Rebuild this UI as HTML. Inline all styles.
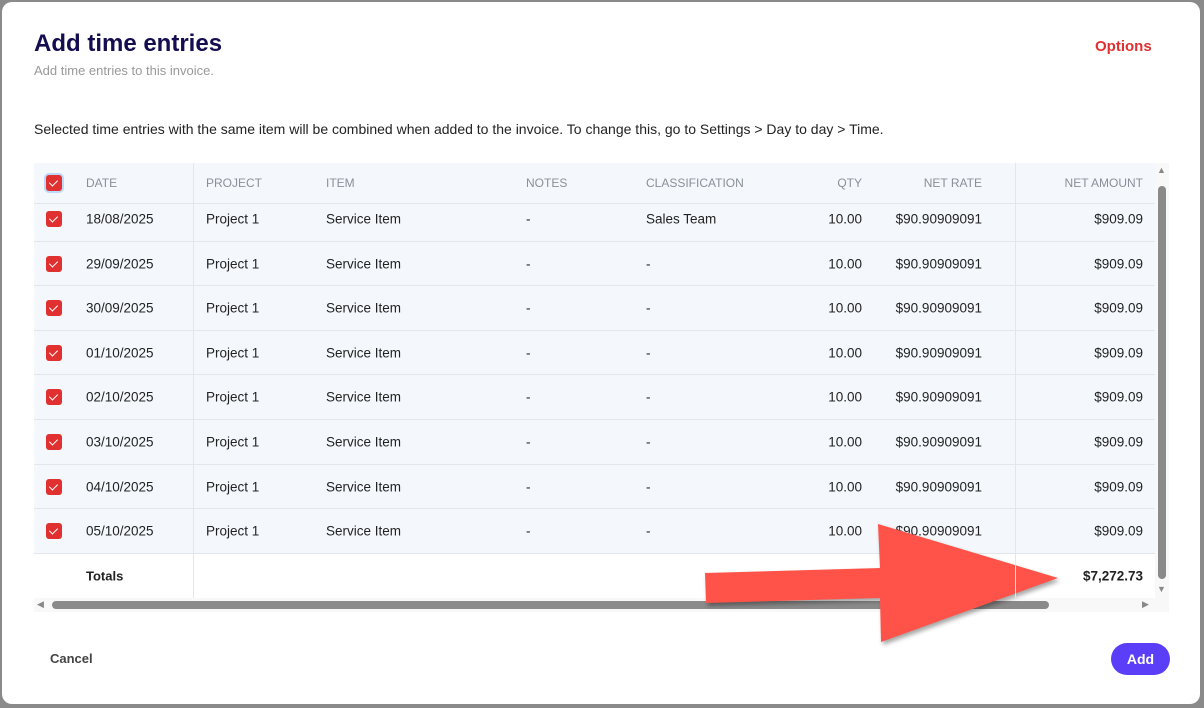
<!DOCTYPE html><html><head><style>
body{margin:0;width:1204px;height:708px;background:#8a8a8a;font-family:"Liberation Sans",sans-serif;position:relative;overflow:hidden}
.m{position:absolute;left:2px;top:2px;width:1198px;height:702px;background:#fff;border-radius:10px}
.a{position:absolute;white-space:nowrap}
.t{position:absolute;left:34px;top:163px;width:1121px;height:435px;background:#fff;overflow:hidden}
.row{position:absolute;left:0;width:1121px;height:44px;border-bottom:1px solid #e3e6ea;background:#f4f8fc;font-size:13.5px;color:#222}
.row span{position:absolute;top:50%;transform:translateY(-50%)}
.cb{left:12px;width:16px;height:16px;background:#e0302f;border-radius:3px}
.cb::after{content:"";position:absolute;left:5px;top:3px;width:4px;height:7px;border:solid #fff;border-width:0 1.5px 1.5px 0;transform:rotate(45deg)}
.h{font-size:12px;color:#8a8f98}
.r{text-align:right}
</style></head><body><div class="m">
<div class="a" style="left:32px;top:28px;font-size:24px;font-weight:bold;color:#140d4f">Add time entries</div>
<div class="a" style="left:32px;top:61px;font-size:13px;color:#999">Add time entries to this invoice.</div>
<div class="a" style="left:1093px;top:36px;font-size:15px;font-weight:bold;color:#e0302f">Options</div>
<div class="a" style="left:32px;top:119px;font-size:14px;color:#222">Selected time entries with the same item will be combined when added to the invoice. To change this, go to Settings &gt; Day to day &gt; Time.</div>
</div>
<div class="t">
<div id="rows"></div>
<div class="row" style="top:0;height:40px;z-index:2"><span class="cb" style="box-shadow:0 0 0 2px #bcd8fb"></span><span class="h" style="left:52px">DATE</span><span class="h" style="left:172px">PROJECT</span><span class="h" style="left:292px">ITEM</span><span class="h" style="left:492px">NOTES</span><span class="h" style="left:612px">CLASSIFICATION</span><span class="h r" style="right:293px">QTY</span><span class="h r" style="right:173px">NET RATE</span><span class="h r" style="right:12px">NET AMOUNT</span></div>
<div class="row" style="top:391px;background:#fff;border:none"><span style="left:52px;font-size:13px;font-weight:bold">Totals</span><span style="right:12px;font-weight:bold">$7,272.73</span></div>
<div style="position:absolute;left:159px;top:0;width:1px;height:435px;background:#e3e6ea;z-index:3"></div>
<div style="position:absolute;left:981px;top:0;width:1px;height:435px;background:#e3e6ea;z-index:3"></div>
</div>
<div style="position:absolute;left:34px;top:598px;width:1135px;height:14px;background:#f8f8f8"></div>
<div style="position:absolute;left:52px;top:601px;width:997px;height:8px;background:#8a8a8a;border-radius:4px"></div>
<div class="a" style="left:37px;top:599px;font-size:9px;color:#888">◀</div><div class="a" style="left:1142px;top:599px;font-size:9px;color:#888">▶</div>
<div style="position:absolute;left:1155px;top:163px;width:14px;height:435px;background:#f8f8f8"></div>
<div style="position:absolute;left:1158px;top:186px;width:8px;height:393px;background:#8a8a8a;border-radius:4px"></div>
<div class="a" style="left:1157px;top:165px;font-size:9px;color:#888">▲</div><div class="a" style="left:1157px;top:584px;font-size:9px;color:#888">▼</div>
<div class="a" style="left:50px;top:651px;font-size:13px;font-weight:bold;color:#444">Cancel</div>
<div class="a" style="left:1111px;top:643px;width:59px;height:32px;border-radius:16px;background:#5b3ff8;color:#fff;font-size:14px;font-weight:bold;text-align:center;line-height:32px">Add</div>
<svg style="position:absolute;left:0;top:0" width="1204" height="708"><polygon points="705,573 880,568 878,524 1058,578 881,642 880,598 706,603" fill="#ff5349" style="filter:drop-shadow(2px 3px 2px rgba(0,0,0,.35))"/></svg>
<script>
var d=["18/08/2025","29/09/2025","30/09/2025","01/10/2025","02/10/2025","03/10/2025","04/10/2025","05/10/2025"],h="";
d.forEach(function(x,i){var t=Math.round(34+i*44.6),b=Math.round(34+(i+1)*44.6);h+='<div class="row" style="top:'+t+'px;height:'+(b-t-1)+'px"><span class="cb"></span><span style="left:52px">'+x+'</span><span style="left:172px">Project 1</span><span style="left:292px">Service Item</span><span style="left:492px">-</span><span style="left:612px">'+(i?'-':'Sales Team')+'</span><span class="r" style="right:293px">10.00</span><span class="r" style="right:173px">$90.90909091</span><span class="r" style="right:12px">$909.09</span></div>'});
document.getElementById("rows").innerHTML=h;
</script>
</body></html>
